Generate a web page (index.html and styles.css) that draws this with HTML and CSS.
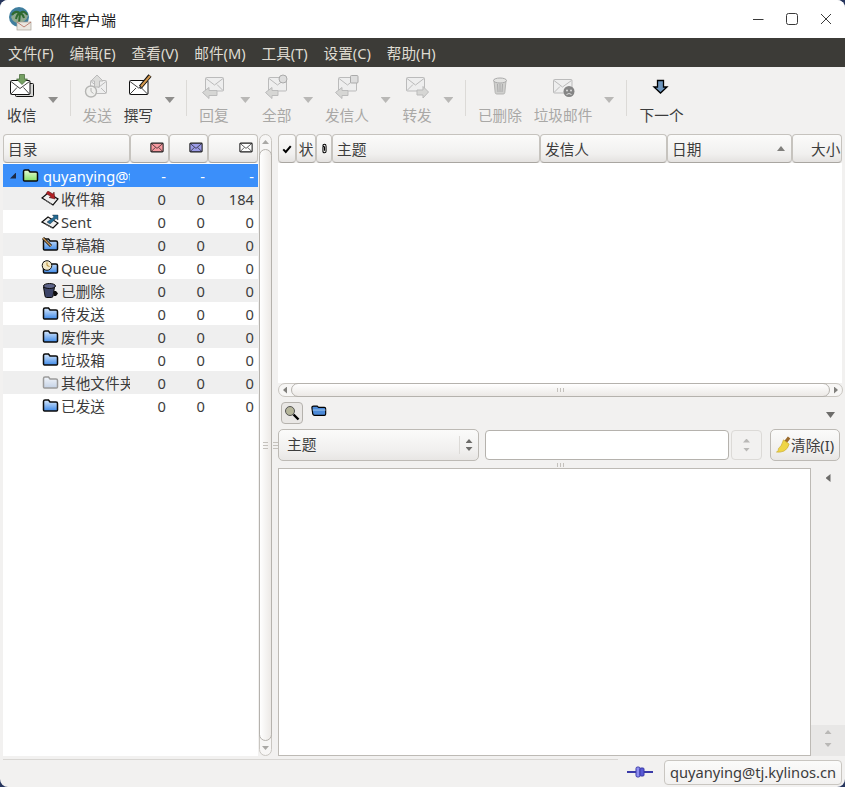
FILE: index.html
```html
<!DOCTYPE html>
<html lang="zh-CN">
  <head>
    <meta charset="UTF-8" />
    <meta name="viewport" content="width=device-width, initial-scale=1.0" />
    <title>邮件客户端</title>
    <link rel="stylesheet" href="styles.css">
  </head>
  <body>
    <!-- shared icons -->
    <svg class="defs" xmlns="http://www.w3.org/2000/svg">
      <defs>
        <linearGradient id="blue" x1="0" y1="0" x2="0" y2="1"><stop offset="0" stop-color="#d9e9fc"/><stop offset="1" stop-color="#3f8ae8"/></linearGradient>
        <linearGradient id="pale" x1="0" y1="0" x2="0" y2="1"><stop offset="0" stop-color="#f2f5fa"/><stop offset="1" stop-color="#c4d2e6"/></linearGradient>
        <linearGradient id="green" x1="0" y1="0" x2="0" y2="1"><stop offset="0" stop-color="#e8fcd6"/><stop offset="1" stop-color="#86e068"/></linearGradient>
        <symbol id="mini-mail" viewBox="0 0 16 12"><rect x="1" y="1" width="14" height="10" rx="1" stroke="#1c1c1c" stroke-width="1.200"/><path d="M1.500 1.500 8 7l6.500-5.500M1.500 10.500 6 6M14.500 10.500 10 6" fill="none" stroke="#1c1c1c" stroke-width=".8"/></symbol>
        <symbol id="folder" viewBox="0 0 18 15"><path d="M2.500 12V3.500q0-1.500 1.500-1.500h3.500l1.500 2h6q1.500 0 1.500 1.500V12q0 1-1 1h-12q-1 0-1-1z" stroke="currentColor" stroke-width="1.500"/></symbol>
      </defs>
    </svg>

    <div class="window">
      <header class="titlebar">
        <svg class="app-icon" viewBox="0 0 24 24">
          <circle cx="11" cy="10" r="10" fill="#3f7e9e"/>
          <path d="M3 10q4-5 8-4 6-1 9 3-2 6-9 7-6 0-8-6z" fill="#8fa88f"/>
          <path d="M11 16 12 6M12 6Q7 3 4 8M12 6q5-3 7 2M12 6q-3 1-4 6M12 6q3 1 4 5" fill="none" stroke="#2f6a2f" stroke-width="2"/>
          <rect x="9" y="15" width="14" height="8" fill="#e9e6e0" stroke="#a9a296" stroke-width=".7"/>
          <path d="M9 15l7 5 7-5" fill="none" stroke="#b46a5a" stroke-width=".8"/>
        </svg>
        <span class="app-title">邮件客户端</span>
        <div class="win-buttons">
          <svg viewBox="0 0 12 12"><path d="M1 6.500h10.500" stroke="#3a3a3a" fill="none"/></svg>
          <svg viewBox="0 0 12 12"><rect x=".5" y=".5" width="11" height="11" rx="2" stroke="#3a3a3a" fill="none"/></svg>
          <svg viewBox="0 0 12 12"><path d="M1 1l10 10M11 1 1 11" stroke="#3a3a3a" fill="none"/></svg>
        </div>
      </header>

      <nav class="menubar">
        <span>文件(F)</span><span>编辑(E)</span><span>查看(V)</span><span>邮件(M)</span><span>工具(T)</span><span>设置(C)</span><span>帮助(H)</span>
      </nav>

      <div class="toolbar">
        <div class="tool">
          <svg class="tool-icon" viewBox="0 0 24 24">
            <rect x="5.500" y="9.500" width="18" height="13" rx="1" fill="#d8d8d6" stroke="#111"/>
            <rect x=".5" y="6.500" width="19.500" height="14" rx="1" fill="#fff" stroke="#111"/>
            <path d="M1 7.500 10 14.500 19.500 7.500M1 20 7 13.500M19.500 20 13.500 13.500" fill="none" stroke="#111" stroke-width=".8"/>
            <path d="M9.500 .5h5v4.500h3L12 10.500 6.500 5h3z" fill="#75a063" stroke="#4c6f40" stroke-width=".8"/>
          </svg>
          <span>收信</span>
        </div>
        <span class="drop"></span>
        <span class="sep"></span>
        <div class="tool off">
          <svg class="tool-icon" viewBox="0 0 24 24">
            <rect x="5.500" y="6.500" width="16" height="13" rx="1" fill="#eee" stroke="#bbb"/>
            <path d="M6 7.500l7.500 6 7.500-6M21 19l-5-5" fill="none" stroke="#bbb"/>
            <path d="M12 1l6 6h-3.500v6h-5V7H6z" fill="#dcdcda" stroke="#bbb"/>
            <circle cx="6" cy="17.500" r="5.500" fill="#efefed" stroke="#b5b5b3" stroke-width="1.400"/>
            <path d="M6 14v3.500l2.500 2" fill="none" stroke="#b5b5b3"/>
          </svg>
          <span>发送</span>
        </div>
        <div class="tool">
          <svg class="tool-icon" viewBox="0 0 24 24">
            <rect x="3.500" y="6.500" width="18.500" height="14" rx="1" fill="#fff" stroke="#111"/>
            <path d="M4 7.500 12.700 14l8.800-6.500M4 20l6-6M21.500 20l-6-6" fill="none" stroke="#111" stroke-width=".8"/>
            <path d="M14.500 13 24 1.500" stroke="#111" stroke-width="4" fill="none"/>
            <path d="M15 12.500 24 1.800" stroke="#d59a4f" stroke-width="2" fill="none"/>
            <path d="M13.500 15l1-2 1.500 1.200z" fill="#111"/>
          </svg>
          <span>撰写</span>
        </div>
        <span class="drop"></span>
        <span class="sep"></span>
        <div class="tool off">
          <svg class="tool-icon" viewBox="0 0 24 24">
            <rect x="3.500" y="3.500" width="18" height="13.500" rx="1" fill="#eee" stroke="#bbb"/>
            <path d="M4 4.500l8.500 6.500L21 4.500M21 16.500 15 10.500" fill="none" stroke="#bbb"/>
            <path d="M.5 18.500l6.500-5v3h8v5H7v3z" fill="#d6d6d4" stroke="#bbb"/>
          </svg>
          <span>回复</span>
        </div>
        <span class="drop"></span>
        <div class="tool off">
          <svg class="tool-icon" viewBox="0 0 24 24">
            <rect x="3.500" y="3.500" width="18" height="13.500" rx="1" fill="#eee" stroke="#bbb"/>
            <path d="M4 4.500l8.500 6.500L21 4.500" fill="none" stroke="#bbb"/>
            <circle cx="18" cy="5" r="4" fill="#ddd" stroke="#aaa"/>
            <path d="M.5 18.500l6.500-5v3h6v5H7v3z" fill="#d6d6d4" stroke="#bbb"/>
          </svg>
          <span>全部</span>
        </div>
        <span class="drop"></span>
        <div class="tool off">
          <svg class="tool-icon" viewBox="0 0 24 24">
            <rect x="3.500" y="3.500" width="18" height="13.500" rx="1" fill="#eee" stroke="#bbb"/>
            <path d="M4 4.500l8.500 6.500L21 4.500" fill="none" stroke="#bbb"/>
            <rect x="15.500" y="1.500" width="7.500" height="7.500" rx="1" fill="#ddd" stroke="#aaa"/>
            <path d="M.5 18.500l6.500-5v3h6v5H7v3z" fill="#d6d6d4" stroke="#bbb"/>
          </svg>
          <span>发信人</span>
        </div>
        <span class="drop"></span>
        <div class="tool off">
          <svg class="tool-icon" viewBox="0 0 24 24">
            <rect x="1.500" y="3.500" width="18" height="13.500" rx="1" fill="#eee" stroke="#bbb"/>
            <path d="M2 4.500l8.500 6.500L19 4.500M2 16.500 8 10.500" fill="none" stroke="#bbb"/>
            <path d="M23.500 18 18 12.500V16h-6v5h6v3z" fill="#d6d6d4" stroke="#bbb"/>
          </svg>
          <span>转发</span>
        </div>
        <span class="drop"></span>
        <span class="sep"></span>
        <div class="tool off">
          <svg class="tool-icon" viewBox="0 0 24 24">
            <path d="M6 7l1.200 11.500q.2 1.500 1.500 1.500h6.600q1.300 0 1.500-1.500L18 7z" fill="#cfcfcd" stroke="#b5b5b3"/>
            <ellipse cx="12" cy="6.500" rx="6.500" ry="2.500" fill="#e4e4e2" stroke="#aaa"/>
            <path d="M9.500 10l.5 8M12 10v8M14.500 10l-.5 8" stroke="#aaa" fill="none"/>
          </svg>
          <span>已删除</span>
        </div>
        <div class="tool off">
          <svg class="tool-icon" viewBox="0 0 24 24">
            <rect x="2.500" y="5.500" width="18.500" height="13.500" rx="1" fill="#eee" stroke="#bbb"/>
            <path d="M3 6.500l8.500 6.500L20.500 6.500M3 18.500 9 12.500" fill="none" stroke="#bbb"/>
            <circle cx="18" cy="17.500" r="5.500" fill="#858585"/>
            <circle cx="16" cy="16.500" r="1" fill="#ddd"/><circle cx="20" cy="16.500" r="1" fill="#ddd"/>
            <path d="M15.500 20.500q2.500-2 5 0" stroke="#ddd" fill="none"/>
          </svg>
          <span>垃圾邮件</span>
        </div>
        <span class="drop"></span>
        <span class="sep"></span>
        <div class="tool next">
          <svg class="tool-icon" viewBox="0 0 24 24">
            <path d="M7.500 6.500h6v6.500H17l-6.500 6-6.500-6h3.500z" fill="#6d95bd" stroke="#000" stroke-width="1.300"/>
          </svg>
          <span>下一个</span>
        </div>
      </div>

      <main class="content">
        <section class="folder-pane">
          <div class="head-row folder-head">
            <div class="head-cell">目录</div>
            <div class="head-cell icon-cell"><svg class="mini"><use href="#mini-mail" fill="#f79aa0"/></svg></div>
            <div class="head-cell icon-cell"><svg class="mini"><use href="#mini-mail" fill="#9c9ce8"/></svg></div>
            <div class="head-cell icon-cell"><svg class="mini"><use href="#mini-mail" fill="#fff"/></svg></div>
          </div>
          <div class="folder-list">
            <div class="row account">
              <div class="name"><span class="expander"></span><svg class="fold"><use href="#folder" fill="url(#green)"/></svg><span class="label">quyanying@t</span></div>
              <span>-</span><span>-</span><span>-</span>
            </div>
            <div class="row alt">
              <div class="name sub">
                <svg class="fold" viewBox="0 0 18 15">
                  <path d="M1 7 7 2l10 6-5 6z" fill="#efefef" stroke="#111" stroke-width="1.200"/>
                  <path d="M4 9l7 4.500" stroke="#666"/>
                  <path d="M7 0l5 3 1-2 1 7-6-1.500 2-1-5-3z" fill="#b11f24" stroke="#4a1010" stroke-width=".5"/>
                </svg>
                <span class="label">收件箱</span>
              </div>
              <span>0</span><span>0</span><span>184</span>
            </div>
            <div class="row">
              <div class="name sub">
                <svg class="fold" viewBox="0 0 18 15">
                  <path d="M1 8 7 3l10 6-5 5z" fill="#efefef" stroke="#111" stroke-width="1.200"/>
                  <path d="M4 10l7 4" stroke="#666"/>
                  <path d="M6 8l7-5-1.500-2H17v5l-2-1.500-6 5.500z" fill="#246a92" stroke="#123" stroke-width=".4"/>
                </svg>
                <span class="label">Sent</span>
              </div>
              <span>0</span><span>0</span><span>0</span>
            </div>
            <div class="row alt">
              <div class="name sub">
                <svg class="fold" viewBox="0 0 18 15"><use href="#folder" width="18" height="15" fill="url(#blue)"/><path d="M2 1l8 8" stroke="#111" stroke-width="3"/><path d="M2 1l8 8" stroke="#c99655" stroke-width="1.500"/></svg>
                <span class="label">草稿箱</span>
              </div>
              <span>0</span><span>0</span><span>0</span>
            </div>
            <div class="row">
              <div class="name sub">
                <svg class="fold" viewBox="0 0 18 15"><use href="#folder" width="18" height="15" fill="url(#blue)"/><circle cx="6" cy="5.500" r="4.800" fill="#f2e8c8" stroke="#111"/><path d="M6 2.500v3l2.500 1" stroke="#b5892f" fill="none"/></svg>
                <span class="label">Queue</span>
              </div>
              <span>0</span><span>0</span><span>0</span>
            </div>
            <div class="row alt">
              <div class="name sub">
                <svg class="fold" viewBox="0 0 18 15">
                  <path d="M2.500 4 4 13q.2 1.500 1.500 1.500h5q1.300 0 1.500-1.500l1.500-9z" fill="#3c4468" stroke="#0c0c0c"/>
                  <ellipse cx="8.500" cy="3" rx="6" ry="2.500" fill="#5d6488" stroke="#0c0c0c"/>
                  <path d="M13 8h2l2 2.500-2 2.500h-2.500z" fill="#0c0c0c"/>
                </svg>
                <span class="label">已删除</span>
              </div>
              <span>0</span><span>0</span><span>0</span>
            </div>
            <div class="row">
              <div class="name sub"><svg class="fold"><use href="#folder" fill="url(#blue)"/></svg><span class="label">待发送</span></div>
              <span>0</span><span>0</span><span>0</span>
            </div>
            <div class="row alt">
              <div class="name sub"><svg class="fold"><use href="#folder" fill="url(#blue)"/></svg><span class="label">废件夹</span></div>
              <span>0</span><span>0</span><span>0</span>
            </div>
            <div class="row">
              <div class="name sub"><svg class="fold"><use href="#folder" fill="url(#blue)"/></svg><span class="label">垃圾箱</span></div>
              <span>0</span><span>0</span><span>0</span>
            </div>
            <div class="row alt">
              <div class="name sub"><svg class="fold ghost"><use href="#folder" fill="url(#pale)"/></svg><span class="label">其他文件夹</span></div>
              <span>0</span><span>0</span><span>0</span>
            </div>
            <div class="row">
              <div class="name sub"><svg class="fold"><use href="#folder" fill="url(#blue)"/></svg><span class="label">已发送</span></div>
              <span>0</span><span>0</span><span>0</span>
            </div>
          </div>
        </section>

        <div class="vscroll">
          <span class="step-up"></span>
          <div class="vthumb"><span class="grip-h"></span></div>
          <span class="step-down"></span>
        </div>
        <div class="gutter"><span class="grip-h"></span></div>

        <section class="mail-pane">
          <div class="head-row mail-head">
            <div class="head-cell tiny"><svg viewBox="0 0 12 12" class="check"><path d="M1.500 6.500 4.500 9.500 10.500 2.500" fill="none" stroke="#000" stroke-width="2.400"/></svg></div>
            <div class="head-cell tiny">状</div>
            <div class="head-cell tiny"><svg viewBox="0 0 8 14" class="clip"><path d="M2 4q0-2.500 2-2.500T6 4v6.500q0 2-2 2t-2-2V5.500q0-1 1-1t1 1V10" fill="none" stroke="#000" stroke-width="1.300"/></svg></div>
            <div class="head-cell">主题</div>
            <div class="head-cell">发信人</div>
            <div class="head-cell sorted">日期<span class="sort-up"></span></div>
            <div class="head-cell size">大小</div>
          </div>
          <div class="mail-list"></div>
          <div class="hscroll">
            <span class="step-left"></span>
            <div class="hthumb"><span class="grip-v"></span></div>
            <span class="step-right"></span>
          </div>

          <div class="search-row">
            <button class="find-btn">
              <svg viewBox="0 0 16 16"><circle cx="6" cy="6" r="4.500" fill="#b5b59a" stroke="#555"/><path d="M9.500 9.500 14.500 14.500" stroke="#000" stroke-width="2.400"/></svg>
            </button>
            <svg class="search-folder" viewBox="0 0 18 14"><path d="M1 4q0-2 2-2h4l1.500 1.500H15q1.500 0 1.500 1.500v6q0 1.500-1.500 1.500H4q-1.500 0-2-1.500z" fill="#4c8ad8" stroke="#000" stroke-width="1.300"/><path d="M2 6.500h14.500" stroke="#a9ccf2"/></svg>
            <span class="more"></span>
          </div>

          <div class="filter-row">
            <div class="combo">
              <span class="combo-text">主题</span>
              <span class="combo-arrows"><i class="up"></i><i class="down"></i></span>
            </div>
            <input class="filter-input" type="text" />
            <div class="spin"><i class="up"></i><i class="down"></i></div>
            <button class="clear-btn">
              <svg viewBox="0 0 16 18"><path d="M10 6 14 1" stroke="#9a6a2c" stroke-width="3.500"/><path d="M8 3.500l6 4.500q-1 5-5.500 7.500-3.500 1.500-8 1 3-1.500 2-3.500Q6 10.500 8 3.500z" fill="#efd545" stroke="#c9a92c" stroke-width=".7"/></svg>
              <span>清除(I)</span>
            </button>
          </div>
          <div class="grip-row"><span class="grip-v"></span></div>

          <div class="preview-row">
            <div class="preview"></div>
            <aside class="side-strip">
              <span class="collapse"></span>
              <div class="side-steps"><i class="up"></i><i class="down"></i></div>
            </aside>
          </div>
        </section>
      </main>

      <footer class="statusbar">
        <div class="status-left"></div>
        <svg class="plug" viewBox="0 0 26 12"><path d="M0 6h9M17 6h9" stroke="#3a3aa8" stroke-width="2"/><rect x="9" y="1" width="4" height="10" rx="1.500" fill="#8f8ff0" stroke="#3a3aa8"/><rect x="13" y="2" width="4" height="8" rx="1" fill="#5a5ad6" stroke="#3a3aa8"/></svg>
        <div class="account-btn">quyanying@tj.kylinos.cn</div>
      </footer>
    </div>
  </body>
</html>
```

FILE: styles.css
```css
* {
  box-sizing: border-box;
}

html,
body {
  margin: 0;
  height: 787px;
  overflow: hidden;
  background: #27365e;
}

body {
  font-family: "Noto Sans", "Noto Sans CJK SC", sans-serif;
  font-size: 14.67px;
  color: #3c3c3c;
}

.defs {
  display: block;
  width: 0;
  height: 0;
}

i {
  display: block;
}

.window {
  display: flex;
  flex-direction: column;
  height: 787px;
  background: #f2f1f0;
  border-radius: 8px;
  overflow: hidden;
}

/* title bar */
.titlebar {
  display: flex;
  align-items: center;
  height: 38px;
  flex: none;
  background: #fff;
  padding-left: 8px;
}

.app-icon {
  width: 24px;
  height: 24px;
  margin-right: 9px;
}

.app-title {
  font-size: 15px;
  color: #222;
}

.win-buttons {
  display: flex;
  gap: 22px;
  margin-left: auto;
  margin-right: 13px;
}

.win-buttons svg {
  width: 12px;
  height: 12px;
}

/* menu */
.menubar {
  display: flex;
  align-items: center;
  gap: 15.8px;
  height: 29px;
  flex: none;
  padding-left: 8px;
  background: #3c3b37;
  color: #dfdbd2;
}

/* toolbar */
.toolbar {
  display: flex;
  gap: 11.75px;
  height: 66px;
  flex: none;
  padding: 7px 0 0 7px;
}

.tool {
  display: flex;
  flex-direction: column;
  align-items: center;
}

.next {
  margin-left: 1px;
}

.tool-icon {
  width: 24px;
  height: 24px;
  margin-bottom: 6px;
  overflow: visible;
}

.tool span {
  line-height: 22px;
  white-space: nowrap;
}

.tool.off {
  color: #a9a8a6;
}

.drop {
  width: 10px;
  height: 6px;
  margin-top: 23px;
  background: #8f8e8c;
  clip-path: polygon(0 0, 100% 0, 50% 100%);
}

.off + .drop {
  background: #b9b8b6;
}

.sep {
  width: 1px;
  height: 36px;
  margin-top: 6px;
  background: #dcdad7;
}

/* main panes */
.content {
  display: flex;
  flex: 1;
  min-height: 0;
  padding: 1px 0 1px 3px;
}

.folder-pane {
  display: flex;
  flex-direction: column;
  width: 255px;
  flex: none;
}

.head-row {
  display: grid;
  height: 29px;
  flex: none;
}

.folder-head {
  grid-template-columns: 127px 39px 39px 50px;
}

.mail-head {
  grid-template-columns: 18px 20px 16px 208px 127px 125px 50px;
}

.head-cell {
  display: flex;
  align-items: center;
  padding: 0 4px;
  overflow: hidden;
  white-space: nowrap;
  background: linear-gradient(#fbfbfa, #f1f0ef 70%, #e4e2e0);
  border: 1px solid #c6c3be;
  border-bottom-color: #a9a6a1;
  border-radius: 4px;
}

.icon-cell {
  justify-content: flex-end;
}

.tiny {
  justify-content: center;
  padding: 0;
}

.check {
  width: 10px;
  height: 10px;
}

.clip {
  width: 7px;
  height: 11px;
}

.sorted {
  justify-content: space-between;
}

.sort-up {
  width: 8px;
  height: 5px;
  margin-right: 2px;
  background: #807f7c;
  clip-path: polygon(50% 0, 100% 100%, 0 100%);
}

.size {
  padding-left: 18px;
}

.mini {
  width: 14px;
  height: 11px;
  margin-bottom: 3px;
}

.folder-list {
  flex: 1;
  padding-top: 1px;
  background: #fff;
}

.row {
  display: grid;
  grid-template-columns: 127px 39px 39px 50px;
  align-items: center;
  height: 23px;
  text-align: right;
}

.row > span {
  padding-right: 3px;
}

.row > span:last-child {
  padding-right: 4px;
}

.row.alt {
  background: #efefef;
}

.account {
  background: #3b8ffa;
  color: #fff;
}

.name {
  display: flex;
  align-items: center;
  overflow: hidden;
  white-space: nowrap;
  text-align: left;
}

.sub {
  padding-left: 38px;
}

.expander {
  width: 6px;
  height: 6px;
  flex: none;
  margin: 0 5px 0 7px;
  background: #1d2a44;
  clip-path: polygon(100% 0, 100% 100%, 0 100%);
}

.fold {
  width: 18px;
  height: 15px;
  flex: none;
  margin-right: 2px;
  color: #0b0b0b;
}

.account .fold {
  margin-right: 4px;
}

.ghost {
  color: #9b9b9b;
}

.label {
  flex: none;
}

/* scrollbars */
.vscroll {
  display: flex;
  flex-direction: column;
  width: 13px;
  flex: none;
  margin-left: 1px;
  border: 1px solid #c9c6c1;
  border-radius: 7px;
  background: #f7f6f5;
}

.vthumb {
  display: flex;
  flex: 1;
  align-items: center;
  justify-content: center;
  margin: 0 -1px;
  border: 1px solid #b5b2ad;
  border-radius: 7px;
  background: linear-gradient(90deg, #fff, #ece9e6);
}

.step-up,
.step-down {
  width: 7px;
  height: 4px;
  margin: 5px auto;
  background: #a9a8a5;
}

.step-up {
  clip-path: polygon(50% 0, 100% 100%, 0 100%);
}

.step-down {
  clip-path: polygon(0 0, 100% 0, 50% 100%);
}

.grip-h {
  width: 5px;
  height: 7px;
  background: repeating-linear-gradient(#c4c1bc 0 1px, transparent 1px 3px);
}

.grip-v {
  width: 7px;
  height: 4px;
  background: repeating-linear-gradient(90deg, #c4c1bc 0 1px, transparent 1px 3px);
}

.gutter {
  display: flex;
  align-items: center;
  justify-content: center;
  width: 6px;
  flex: none;
}

.mail-pane {
  display: flex;
  flex-direction: column;
  flex: 1;
  min-width: 0;
}

.mail-head {
  width: 564px;
}

.mail-list {
  height: 220px;
  width: 564px;
  flex: none;
  background: #fff;
}

.hscroll {
  display: flex;
  align-items: center;
  width: 565px;
  height: 14px;
  flex: none;
  border: 1px solid #c9c6c1;
  border-radius: 7px;
  background: #f7f6f5;
}

.hthumb {
  display: flex;
  flex: 1;
  align-self: stretch;
  align-items: center;
  justify-content: center;
  margin: -1px 0;
  border: 1px solid #b5b2ad;
  border-radius: 7px;
  background: linear-gradient(#fff, #ece9e6);
}

.step-left,
.step-right {
  width: 4px;
  height: 7px;
  margin: 0 4px;
  background: #807f7c;
}

.step-left {
  clip-path: polygon(100% 0, 100% 100%, 0 50%);
}

.step-right {
  clip-path: polygon(0 0, 100% 50%, 0 100%);
}

/* search and filter */
.search-row {
  display: flex;
  align-items: center;
  height: 32px;
  flex: none;
  padding: 0 10px 0 3px;
}

.find-btn {
  display: flex;
  align-items: center;
  justify-content: center;
  width: 22px;
  height: 22px;
  padding: 0;
  border: 1px solid #b5b2ad;
  border-radius: 4px;
  background: #e9e7e5;
}

.find-btn svg {
  width: 16px;
  height: 16px;
}

.search-folder {
  width: 16px;
  height: 13px;
  margin: 0 0 5px 8px;
}

.more {
  width: 9px;
  height: 6px;
  margin-left: auto;
  margin-top: 4px;
  background: #6d6c6a;
  clip-path: polygon(0 0, 100% 0, 50% 100%);
}

.filter-row {
  display: flex;
  align-items: center;
  height: 32px;
  flex: none;
}

.combo {
  display: flex;
  align-items: center;
  justify-content: space-between;
  width: 201px;
  height: 32px;
  padding-left: 8px;
  border: 1px solid #bdbab5;
  border-radius: 5px;
  background: linear-gradient(#fbfbfa, #f0efee 70%, #e8e6e4);
}

.combo-text {
  margin-bottom: 3px;
}

.combo-arrows {
  display: flex;
  flex-direction: column;
  align-items: center;
  gap: 4px;
  width: 19px;
  padding: 3px 0;
  border-left: 1px solid #dcdad7;
}

.up,
.down {
  width: 7px;
  height: 4px;
  background: #6d6c6a;
}

.up {
  clip-path: polygon(50% 0, 100% 100%, 0 100%);
}

.down {
  clip-path: polygon(0 0, 100% 0, 50% 100%);
}

.filter-input {
  width: 244px;
  height: 30px;
  margin-left: 6px;
  border: 1px solid #b5b2ad;
  border-radius: 4px;
  background: #fff;
}

.spin {
  display: flex;
  flex-direction: column;
  align-items: center;
  justify-content: center;
  gap: 5px;
  width: 31px;
  height: 30px;
  margin-left: 2px;
  border: 1px solid #dcdad7;
  border-radius: 4px;
}

.spin i {
  background: #b9b8b6;
}

.clear-btn {
  display: flex;
  align-items: center;
  width: 70px;
  height: 32px;
  margin-left: 8px;
  padding: 0 0 0 5px;
  font: inherit;
  color: inherit;
  white-space: nowrap;
  border: 1px solid #bdbab5;
  border-radius: 5px;
  background: linear-gradient(#fbfbfa, #f0efee 70%, #e8e6e4);
}

.clear-btn svg {
  width: 15px;
  height: 18px;
  flex: none;
}

.clear-btn span {
  margin-bottom: 2px;
}

.grip-row {
  display: flex;
  align-items: center;
  justify-content: center;
  height: 7px;
  width: 565px;
  flex: none;
}

.preview-row {
  display: flex;
  flex: 1;
  min-height: 0;
}

.preview {
  width: 533px;
  flex: none;
  background: #fff;
  border: 1px solid #bdbab5;
}

.side-strip {
  display: flex;
  flex: 1;
  flex-direction: column;
  align-items: center;
  justify-content: space-between;
}

.collapse {
  width: 5px;
  height: 8px;
  margin-top: 6px;
  background: #6d6c6a;
  clip-path: polygon(100% 0, 100% 100%, 0 50%);
}

.side-steps {
  display: flex;
  flex-direction: column;
  align-items: center;
  gap: 9px;
  align-self: stretch;
  height: 31px;
  padding-top: 5px;
  background: #e8e7e6;
}

.side-steps i {
  background: #b9b8b6;
}

/* status bar */
.statusbar {
  display: flex;
  align-items: center;
  height: 30px;
  flex: none;
  padding: 0 3px;
}

.status-left {
  flex: 1;
  align-self: flex-start;
  margin-top: 2px;
  border-top: 1px solid #d8d6d3;
}

.plug {
  width: 26px;
  height: 12px;
  margin: 0 11px 1px 9px;
}

.account-btn {
  width: 178px;
  height: 25px;
  line-height: 23px;
  text-align: center;
  white-space: nowrap;
  border: 1px solid #c9c6c1;
  border-radius: 4px;
  background: linear-gradient(#fbfbfa, #f2f1f0);
}
```
